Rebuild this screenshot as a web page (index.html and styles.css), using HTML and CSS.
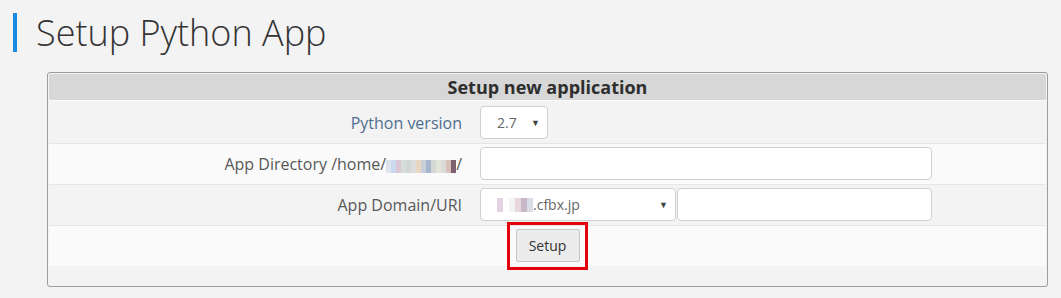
FILE: index.html
```html
<!DOCTYPE html>
<html lang="en">
<head>
  <meta charset="UTF-8" />
  <title>Setup Python App</title>
  <link rel="stylesheet" href="styles.css">
</head>
<body>
  <div class="page">
    <h1 class="page-title">Setup Python App</h1>

    <div class="panel">
      <div class="panel-header">Setup new application</div>

      <div class="form-row first">
        <div class="label label-blue">Python version</div>
        <div class="control">
          <div class="select select-version">
            <span class="select-text">2.7</span>
            <span class="caret">&#9660;</span>
          </div>
        </div>
      </div>

      <div class="form-row alt">
        <div class="label">App Directory /home/<span class="mosaic mosaic-dir"><i style="background:#dde3ea"></i><i style="background:#cbd9ee"></i><i style="background:#dac7d4"></i><i style="background:#d6ddd9"></i><i style="background:#d0d7d4"></i><i style="background:#dcdcdc"></i><i style="background:#e9d6c0"></i><i style="background:#c9ced8"></i><i style="background:#a6b6cd"></i><i style="background:#d4d8d5"></i><i style="background:#e2e4da"></i><i style="background:#dadcd8"></i><i style="background:#d9c1b9"></i><i style="background:#7e6171"></i></span>/</div>
        <div class="control">
          <input class="text-input input-dir" type="text">
        </div>
      </div>

      <div class="form-row">
        <div class="label">App Domain/URI</div>
        <div class="control">
          <div class="select select-domain">
            <span class="select-text"><span class="mosaic mosaic-domain"><i style="background:#e3d3e0"></i><i style="background:#ffffff"></i><i style="background:#f3f3f6"></i><i style="background:#e8d8dc"></i><i style="background:#c9b8c8"></i><i style="background:#d7dce6"></i></span>.cfbx.jp</span>
            <span class="caret">&#9660;</span>
          </div>
          <input class="text-input input-uri" type="text">
        </div>
      </div>

      <div class="form-row alt actions">
        <span class="button-wrap">
          <button class="btn">Setup</button>
          <span class="highlight"></span>
        </span>
      </div>
    </div>
  </div>
</body>
</html>
```

FILE: styles.css
```css
* {
  box-sizing: border-box;
}

body {
  margin: 0;
  background: #f3f3f3;
  font-family: 'Open Sans', sans-serif;
  color: #333;
}

.page {
  padding: 13px 13px;
}

.page-title {
  margin: 0;
  padding-left: 19px;
  border-left: 4px solid #1a8be0;
  font-size: 36px;
  font-weight: 300;
  line-height: 39px;
  color: #333;
}

.panel {
  width: 1001px;
  margin: 20px 0 0 34px;
  padding: 1px 1px 20px;
  border: 1px solid #9c9c9c;
  border-radius: 3px;
  background: #f3f3f3;
}

.panel-header {
  height: 26px;
  line-height: 26px;
  background: #d7d7d7;
  border-radius: 2px;
  text-align: center;
  font-size: 18px;
  font-weight: 700;
  color: #2e2e2e;
}

.form-row {
  display: grid;
  grid-template-columns: 421px 1fr;
  align-items: center;
  padding: 3px 0 4px;
  border-top: 1px solid #e6e6e6;
  background: #f3f3f3;
}

.form-row.first {
  padding-top: 5px;
  border-top-color: #fafafa;
}

.form-row.alt {
  background: #fafafa;
}

.label {
  padding-right: 8px;
  text-align: right;
  font-size: 16px;
  color: #585858;
  line-height: 22px;
}

.label-blue {
  color: #4e6e90;
}

.control {
  display: flex;
  gap: 1px;
  padding-left: 10px;
}

.select {
  display: flex;
  align-items: center;
  justify-content: space-between;
  height: 33px;
  padding: 0 7px 0 16px;
  background: #fff;
  border: 1px solid #cfcfcf;
  border-radius: 4px;
  font-size: 14px;
  color: #666;
}

.select-version {
  width: 68px;
}

.select-domain {
  width: 196px;
}

.select-text {
  display: flex;
  align-items: center;
}

.caret {
  font-size: 9px;
  color: #444;
}

.text-input {
  height: 33px;
  margin: 0;
  padding: 6px 12px;
  background: #fff;
  border: 1px solid #cfcfcf;
  border-radius: 4px;
  font-family: inherit;
  font-size: 14px;
}

.input-dir {
  width: 452px;
}

.input-uri {
  width: 255px;
}

.mosaic {
  display: inline-flex;
  vertical-align: middle;
}

.mosaic i {
  display: block;
  width: 5px;
  height: 13px;
}

.mosaic-dir {
  margin-top: 2px;
}

.mosaic-domain i {
  width: 6px;
  height: 14px;
}

.actions {
  grid-template-columns: 1fr;
  justify-items: center;
}

.button-wrap {
  position: relative;
  display: inline-block;
}

.btn {
  display: block;
  width: 64px;
  height: 33px;
  padding: 0;
  background: #ececec;
  border: 1px solid #c6c6c6;
  border-radius: 2px;
  font-family: inherit;
  font-size: 14px;
  color: #333;
}

/* red annotation box around the button */
.highlight {
  position: absolute;
  left: -9px;
  top: -7px;
  width: 81px;
  height: 48px;
  border: 3px solid #e5000c;
}
```
